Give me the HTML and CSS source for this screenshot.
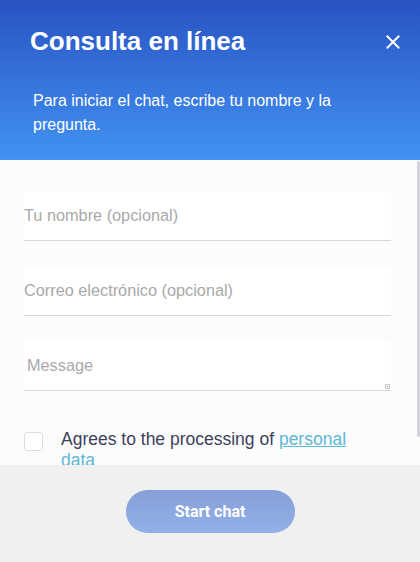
FILE: index.html
```html
<!DOCTYPE html>
<html lang="es">
<head>
<meta charset="utf-8">
<title>Consulta en línea</title>
<link rel="stylesheet" href="styles.css">
</head>
<body>
<div class="widget">
  <header class="head">
    <div class="head-top">
      <h1 class="title">Consulta en línea</h1>
      <button class="close" aria-label="Cerrar">
        <svg width="14" height="14" viewBox="0 0 14 14"><path d="M1.5 1.5L12.5 12.5M12.5 1.5L1.5 12.5" stroke="#fff" stroke-width="2" stroke-linecap="square" fill="none"/></svg>
      </button>
    </div>
    <p class="desc">Para iniciar el chat, escribe tu nombre y la pregunta.</p>
  </header>
  <div class="body-wrap">
    <main class="body">
      <form class="form">
        <input class="field" type="text" placeholder="Tu nombre (opcional)">
        <input class="field" type="email" placeholder="Correo electrónico (opcional)">
        <div class="area-wrap">
          <textarea class="field area" placeholder="Message"></textarea>
          <span class="grip"></span>
        </div>
        <label class="agree">
          <span class="box"></span>
          <span class="agree-text">Agrees to the processing of <a href="#" class="link">personal data</a></span>
        </label>
      </form>
    </main>
    <span class="thumb"></span>
  </div>
  <footer class="foot">
    <button class="start" type="button">Start chat</button>
  </footer>
</div>
</body>
</html>
```

FILE: styles.css
```css
* { box-sizing: border-box; }
html, body { margin: 0; padding: 0; }
body { font-family: "Liberation Sans", Arial, sans-serif; background: #fcfcfc; }

.widget {
  width: 420px;
  height: 562px;
  display: flex;
  flex-direction: column;
  overflow: hidden;
}

.head {
  height: 160px;
  flex: none;
  background: linear-gradient(180deg, #2953c2 0%, #3a7fe4 70%, #4293f2 100%);
  color: #fff;
  padding: 26px 20px 0 30px;
}
.head-top {
  display: flex;
  align-items: center;
  justify-content: space-between;
}
.title {
  margin: 0;
  font-size: 26px;
  font-weight: bold;
  line-height: 30px;
}
.close {
  background: none;
  border: 0;
  padding: 0;
  width: 14px;
  height: 14px;
  margin-top: 2px;
  display: flex;
  cursor: pointer;
}
.desc {
  margin: 33px 30px 0 3px;
  font-size: 16px;
  line-height: 24px;
}

.body-wrap {
  flex: 1;
  min-height: 0;
  position: relative;
  display: flex;
}
.body {
  flex: 1;
  overflow-y: auto;
  background: #fcfcfc;
  scrollbar-width: none;
}
.body::-webkit-scrollbar { display: none; }
.thumb {
  position: absolute;
  right: 0;
  top: 1px;
  width: 3px;
  height: 276px;
  background: #d2d3dc;
  border-radius: 2px;
}

.form {
  padding: 31px 29px 32px 24px;
  display: flex;
  flex-direction: column;
}
.field {
  display: block;
  width: 100%;
  height: 50px;
  border: 0;
  border-bottom: 1px solid #d9d9d9;
  background: #fff;
  font-family: "Liberation Sans", Arial, sans-serif;
  font-size: 16.3px;
  color: #333;
  padding: 0;
  margin: 0 0 25px;
  outline: none;
}
.field::placeholder { color: #a9a9a9; }
.area-wrap {
  position: relative;
  margin-bottom: 40px;
}
.area {
  padding: 15px 3px 0;
  resize: none;
  line-height: 19px;
  margin: 0;
}
.grip {
  position: absolute;
  right: 1px;
  bottom: 2px;
  width: 5px;
  height: 5px;
  border: 1px solid #c8c8c8;
  background: #fff;
}
.grip::after {
  content: "";
  position: absolute;
  left: 1px;
  top: 1px;
  width: 1px;
  height: 1px;
  background: #777;
}

.agree {
  display: flex;
  align-items: flex-start;
  gap: 18px;
  padding-right: 30px;
  cursor: pointer;
}
.box {
  flex: none;
  width: 19px;
  height: 19px;
  border: 1px solid #dcdcdc;
  border-radius: 3px;
  background: #fff;
  margin-top: 1px;
}
.agree-text {
  font-size: 17.5px;
  line-height: 21px;
  color: #3d415c;
  margin-top: -2px;
}
.link {
  color: #5db8d8;
  text-decoration: underline;
}

.foot {
  flex: none;
  height: 97px;
  background: #f0f0f1;
  display: flex;
  justify-content: center;
  padding-top: 25px;
}
.start {
  width: 169px;
  height: 43px;
  border: 0;
  border-radius: 22px;
  background: linear-gradient(180deg, #879fd8 0%, #91b1e8 100%);
  color: #fff;
  font-family: Roboto, "Liberation Sans", sans-serif;
  font-weight: bold;
  font-size: 16px;
  cursor: pointer;
}
```
